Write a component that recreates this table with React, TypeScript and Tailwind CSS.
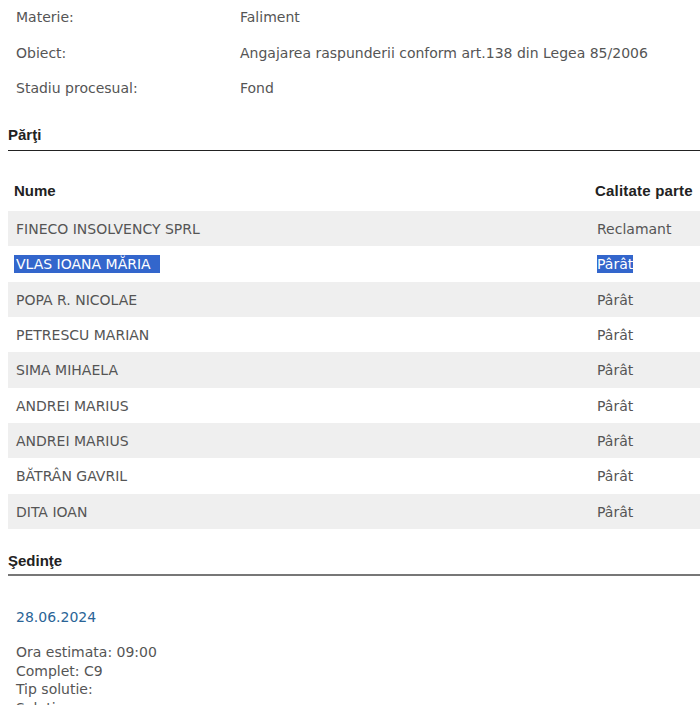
import React from "react";

const details = [
  { label: "Materie:", value: "Faliment" },
  { label: "Obiect:", value: "Angajarea raspunderii conform art.138 din Legea 85/2006" },
  { label: "Stadiu procesual:", value: "Fond" },
];

const parti = [
  { nume: "FINECO INSOLVENCY SPRL", calitate: "Reclamant" },
  { nume: "VLAS IOANA MĂRIA", calitate: "Pârât", selected: true },
  { nume: "POPA R. NICOLAE", calitate: "Pârât" },
  { nume: "PETRESCU MARIAN", calitate: "Pârât" },
  { nume: "SIMA MIHAELA", calitate: "Pârât" },
  { nume: "ANDREI MARIUS", calitate: "Pârât" },
  { nume: "ANDREI MARIUS", calitate: "Pârât" },
  { nume: "BĂTRÂN GAVRIL", calitate: "Pârât" },
  { nume: "DITA IOAN", calitate: "Pârât" },
];

const body = "font-['DejaVu_Sans',sans-serif] text-[14px] text-[#555]";
const heading = "font-['Liberation_Sans',Arial,sans-serif] font-bold text-[15px] text-[#222]";

export default function App() {
  return (
    <div className="w-[700px] h-[705px] overflow-hidden bg-white">
      {/* Detalii dosar */}
      <div className={`${body} pl-4 pt-[7px]`}>
        {details.map((d) => (
          <div key={d.label} className="flex h-[35.5px] items-start">
            <span className="w-[224px]">{d.label}</span>
            <span>{d.value}</span>
          </div>
        ))}
      </div>

      {/* Parti */}
      <div className="ml-2 mt-[10px]">
        <div className={`${heading} pb-[4px] border-b border-[#222]`}>Părţi</div>
      </div>

      <div className="ml-2 mt-[29px]">
        <div className={`${heading} flex h-[31px] text-[15.5px]`}>
          <span className="w-[587px] pl-[6px]">Nume</span>
          <span className="tracking-[0.2px]">Calitate parte</span>
        </div>
        {parti.map((p, i) => (
          <div
            key={i}
            className={`${body} flex h-[35.33px] items-center pt-[2px] ${i % 2 === 0 ? "bg-[#efefef]" : "bg-white"}`}
          >
            <span className="w-[589px] pl-2">
              {p.selected ? (
                <span className="bg-[#3366cc] text-white -ml-[2px] pl-[2px] py-[1px]">{p.nume}&nbsp;&nbsp;</span>
              ) : (
                p.nume
              )}
            </span>
            <span>
              {p.selected ? (
                <span className="bg-[#3366cc] text-white py-[1px]">{p.calitate}</span>
              ) : (
                p.calitate
              )}
            </span>
          </div>
        ))}
      </div>

      {/* Sedinte */}
      <div className="ml-2 mt-[21px]">
        <div className={`${heading} pb-[2px] border-b-2 border-[#777]`}>Şedinţe</div>
      </div>

      <div className={`${body} pl-4 mt-[31px]`}>
        <div className="text-[#2a6496]">28.06.2024</div>
        <div className="mt-[15px] leading-[18.5px]">
          <div>Ora estimata: 09:00</div>
          <div>Complet: C9</div>
          <div>Tip solutie:</div>
          <div>Solutie sumar:</div>
        </div>
      </div>
    </div>
  );
}
